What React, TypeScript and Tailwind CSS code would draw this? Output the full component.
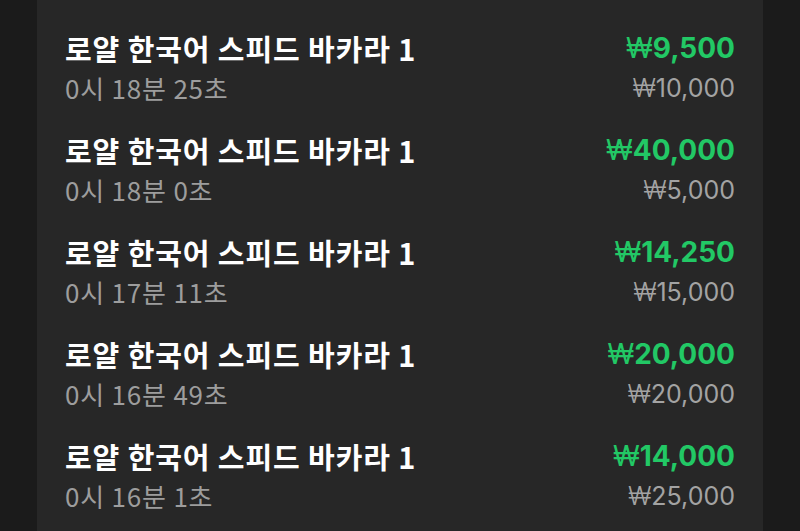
import React from "react";

const rows = [
  { time: "0시 18분 25초", win: "9,500", bet: "10,000" },
  { time: "0시 18분 0초", win: "40,000", bet: "5,000" },
  { time: "0시 17분 11초", win: "14,250", bet: "15,000" },
  { time: "0시 16분 49초", win: "20,000", bet: "20,000" },
  { time: "0시 16분 1초", win: "14,000", bet: "25,000" },
];

export default function App() {
  return (
    <div
      className="w-[800px] h-[531px] overflow-hidden bg-[#1b1b1b] flex justify-center"
      style={{ fontFamily: '"Noto Sans CJK KR", "Noto Sans", sans-serif' }}
    >
      <div className="w-[726px] h-full bg-[#272727] px-[28px] pt-[17px] overflow-hidden">
        <div className="flex flex-col">
          {rows.map((r, i) => (
            <div key={i} className="flex justify-between items-start py-[11px] h-[102px]">
              <div className="flex flex-col">
                <div className="text-[29px] leading-[40px] font-bold text-white tracking-[0.9px]">
                  로얄 한국어 스피드 바카라 1
                </div>
                <div className="text-[26px] leading-[40px] text-[#9d9d9d] tracking-[0.8px]">
                  {r.time}
                </div>
              </div>
              <div
                className="flex flex-col items-end"
                style={{ fontFamily: 'Inter, "Noto Sans CJK KR", sans-serif' }}
              >
                <div className="text-[28px] leading-[40px] font-bold text-[#22c865]">
                  <span className="font-normal">₩</span>
                  {r.win}
                </div>
                <div className="text-[25px] leading-[40px] text-[#a3a3a3]">
                  <span className="font-light">₩</span>
                  {r.bet}
                </div>
              </div>
            </div>
          ))}
        </div>
      </div>
    </div>
  );
}
